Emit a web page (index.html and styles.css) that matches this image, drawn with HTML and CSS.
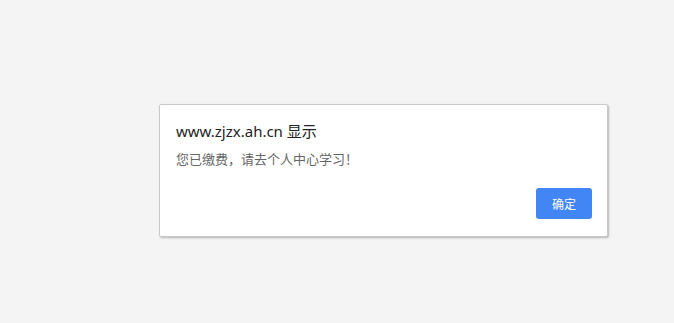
FILE: index.html
```html
<!DOCTYPE html>
<html lang="zh-CN">
<head>
<meta charset="utf-8">
<link rel="stylesheet" href="styles.css">
</head>
<body>
<div class="dialog">
  <div class="title">www.zjzx.ah.cn 显示</div>
  <div class="message">您已缴费，请去个人中心学习！</div>
  <div class="actions"><button class="ok">确定</button></div>
</div>
</body>
</html>
```
FILE: styles.css
```css
html, body { margin: 0; padding: 0; }
body {
  background: #f4f4f4;
  height: 323px;
  font-family: "Noto Sans", "Noto Sans CJK SC", sans-serif;
  padding-top: 104px;
  padding-left: 159px;
  box-sizing: border-box;
}
.dialog {
  width: 449px;
  height: 133px;
  box-sizing: border-box;
  background: #fff;
  border: 1px solid #c9c9c9;
  border-radius: 2px;
  box-shadow: 1px 1px 2px rgba(0,0,0,0.25);
  padding: 16px 15px 17px 16px;
  display: flex;
  flex-direction: column;
}
.title {
  font-size: 15px;
  line-height: 20px;
  color: #222;
}
.message {
  margin-top: 9px;
  font-family: "Noto Sans CJK SC", sans-serif;
  font-size: 13px;
  line-height: 18px;
  color: #666;
}
.actions {
  margin-top: auto;
  display: flex;
  justify-content: flex-end;
}
.ok {
  width: 56px;
  height: 31px;
  border: none;
  border-radius: 3px;
  background: #4285f4;
  color: #fff;
  font-family: "Noto Sans CJK SC", sans-serif;
  font-size: 12px;
  padding: 0;
}
```
